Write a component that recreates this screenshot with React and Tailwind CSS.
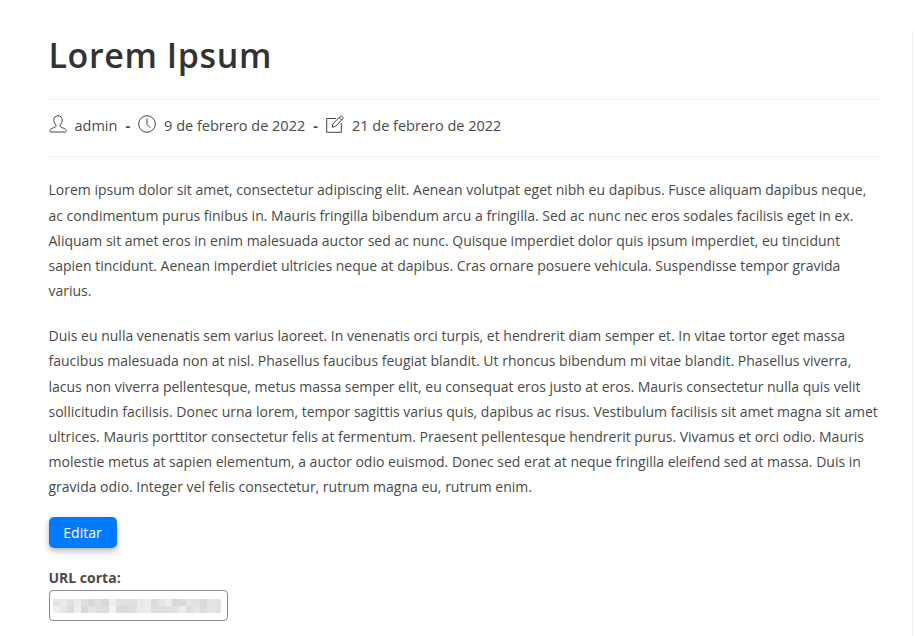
import React from 'react';

const blurRows = [
  ['#e4e4e4', '#ebebeb', '#e2e2e2', '#e9eaea', '#e2dfe0', '#d9d6d6', '#dfe0e0', '#d3d8d8', '#eef0f0', '#e2e0e0', '#e4e2e2', '#dfe2e2', '#eaeaea', '#ebedee', '#dcdcdc', '#e5e5e5', '#ebeced', '#dcd6d6', '#d5dbdb', '#e5e3e3', '#e2e1e1', '#d9dbdb', '#e4e4e4', '#e2e2e2'],
  ['#f0f0f0', '#e8e8e8', '#dcdcdc', '#efefef', '#dcd7d9', '#e4e4e2', '#dfdfdc', '#dbdfdf', '#f2f2f2', '#dddada', '#dcdada', '#dce0e0', '#e9e9e9', '#eceff0', '#e0dfdf', '#dfdede', '#e0dfdf', '#e3e0e0', '#e9eef0', '#dedfdf', '#e6e6e6', '#dcdcdc', '#e4e4e4', '#e2e2e2'],
];

const UserIcon = () => (
  <svg width="18" height="18" viewBox="0 0 18 18" fill="none" stroke="#444" strokeWidth="1" className="mb-[3px] shrink-0">
    <path d="M9 .7c-2.600 0-4.200 1.900-4.200 4.400 0 2.100 1 3.800 2.200 4.700.3 1.200-.1 2-1.200 2.500-1.900.8-4.600 1.200-5 3.100-.1.600 0 1.600.6 1.600h15.200c.6 0 .7-1 .6-1.600-.4-1.900-3.100-2.300-5-3.100-1.100-.5-1.500-1.300-1.200-2.500 1.200-.9 2.200-2.600 2.200-4.700C13.200 2.600 11.600.7 9 .7z" />
  </svg>
);

const ClockIcon = () => (
  <svg width="18" height="18" viewBox="0 0 18 18" fill="none" stroke="#444" strokeWidth="1" className="mb-[3px] shrink-0">
    <circle cx="9" cy="9" r="8.300" />
    <path d="M9 3.500V9.500l3.200 3.200" />
  </svg>
);

const EditIcon = () => (
  <svg width="18" height="18" viewBox="0 0 18 18" fill="none" stroke="#444" strokeWidth="1" className="mb-[3px] shrink-0">
    <path d="M10 3.500H.7v13.800h14.600V8" />
    <path d="M6.200 12.200l.8-3.400L14.400 1.200c.4-.4 1-.4 1.400 0l1.100 1.100c.4.4.4 1 0 1.400L9.500 11.300z" />
    <path d="M13.200 2.500l2.500 2.500" />
  </svg>
);

const App = () => {
  return (
    <div className="relative h-[636px] overflow-hidden bg-white font-['Open_Sans',sans-serif] text-[14px] leading-[25.2px] text-[#4a4a4a]">
      <div className="absolute right-[2px] top-[30px] bottom-0 w-px bg-[#f1f1f1]" />
      <div className="ml-[48.5px] w-[833px]">
        <h1 className="h-[99px] pt-[31px] text-[34px] leading-[48px] font-semibold tracking-[0.6px] text-[#333]">Lorem Ipsum</h1>
        <div className="flex h-[58px] items-center border-y border-[#f1f1f1] pb-[5px] text-[14.5px] text-[#4a4a4a]">
          <UserIcon />
          <span className="ml-[8px]">admin</span>
          <span className="mx-[8px] font-bold">-</span>
          <ClockIcon />
          <span className="ml-[8px]">9 de febrero de 2022</span>
          <span className="mx-[8px] font-bold">-</span>
          <EditIcon />
          <span className="ml-[8px]">21 de febrero de 2022</span>
        </div>
        <div className="mt-[20.4px] w-[835px]">
          <p>Lorem ipsum dolor sit amet, consectetur adipiscing elit. Aenean volutpat eget nibh eu dapibus. Fusce aliquam dapibus neque, ac condimentum purus finibus in. Mauris fringilla bibendum arcu a fringilla. Sed ac nunc nec eros sodales facilisis eget in ex. Aliquam sit amet eros in enim malesuada auctor sed ac nunc. Quisque imperdiet dolor quis ipsum imperdiet, eu tincidunt sapien tincidunt. Aenean imperdiet ultricies neque at dapibus. Cras ornare posuere vehicula. Suspendisse tempor gravida varius.</p>
          <p className="mt-[19.85px]">Duis eu nulla venenatis sem varius laoreet. In venenatis orci turpis, et hendrerit diam semper et. In vitae tortor eget massa faucibus malesuada non at nisl. Phasellus faucibus feugiat blandit. Ut rhoncus bibendum mi vitae blandit. Phasellus viverra, lacus non viverra pellentesque, metus massa semper elit, eu consequat eros justo at eros. Mauris consectetur nulla quis velit sollicitudin facilisis. Donec urna lorem, tempor sagittis varius quis, dapibus ac risus. Vestibulum facilisis sit amet magna sit amet ultrices. Mauris porttitor consectetur felis at fermentum. Praesent pellentesque hendrerit purus. Vivamus et orci odio. Mauris molestie metus at sapien elementum, a auctor odio euismod. Donec sed erat at neque fringilla eleifend sed at massa. Duis in gravida odio. Integer vel felis consectetur, rutrum magna eu, rutrum enim.</p>
        </div>
        <button type="button" className="mt-[17.75px] block h-[31px] w-[68px] rounded-[5px] bg-[#007bff] text-[14px] text-white shadow-[0_3px_6px_rgba(0,0,0,0.3)]">Editar</button>
        <div className="mt-[21px] text-[14px] leading-[18px] font-bold">URL corta:</div>
        <div className="mt-[3px] flex h-[31px] w-[179px] flex-col justify-center rounded-[4px] border border-[#8a8a8a] bg-white pl-[3px]">
          {blurRows.map((row, i) => (
            <div key={i} className="flex">
              {row.map((color, j) => (
                <span key={j} className="block h-[7px] w-[7px]" style={{ backgroundColor: color }} />
              ))}
            </div>
          ))}
        </div>
      </div>
    </div>
  );
};

export default App;
